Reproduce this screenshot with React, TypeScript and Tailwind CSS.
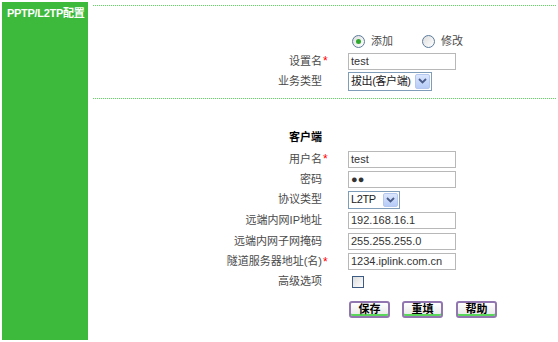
import React from "react";

const FONT = "font-['Liberation_Sans','Noto_Sans_CJK_SC',sans-serif]";

function Star() {
  return <span className="text-[#ff0000] text-[12px] leading-none">*</span>;
}

function Dots({ className }: { className: string }) {
  return (
    <div
      className={`h-[1px] bg-[linear-gradient(to_right,#74c874_50%,#e2f4e2_50%)] bg-[length:2px_1px] ${className}`}
    />
  );
}

function Row({
  label,
  star,
  h,
  bold,
  children,
}: {
  label: string;
  star?: boolean;
  h: string;
  bold?: boolean;
  children?: React.ReactNode;
}) {
  return (
    <div className={`flex items-center ${h}`}>
      <div
        className={`w-[229px] text-right text-[11px] leading-none ${
          bold ? "font-bold text-black" : "text-[#4a4a4a]"
        }`}
      >
        {label}
      </div>
      <div className="w-[26px] pl-[1px] flex items-center">{star ? <Star /> : null}</div>
      <div className="flex items-center">{children}</div>
    </div>
  );
}

function TextBox({ value }: { value: string }) {
  return (
    <div className="w-[108px] h-[17px] border border-[#b8b8b8] bg-white flex items-center px-[2px] text-[11px] text-[#333] leading-none">
      {value}
    </div>
  );
}

function Chevron() {
  return (
    <svg width="9" height="6" viewBox="0 0 9 6">
      <path d="M1 1 L4.5 4.5 L8 1" fill="none" stroke="#4a5d88" strokeWidth="1.8" />
    </svg>
  );
}

function SelectBox({ value, w, h }: { value: string; w: string; h: string }) {
  return (
    <div
      className={`${w} ${h} border border-[#7f9db9] bg-white flex items-center justify-between pl-[2px] pr-[1px] text-[11px] text-[#222] leading-none`}
    >
      <span className="tracking-[-0.4px] whitespace-nowrap">{value}</span>
      <div className="w-[15px] shrink-0 h-[calc(100%-2px)] bg-gradient-to-b from-[#dbe6fd] to-[#b6cbf7] border border-[#b4c7ef] rounded-[2px] flex items-center justify-center">
        <Chevron />
      </div>
    </div>
  );
}

function Radio({ checked }: { checked?: boolean }) {
  return (
    <div className="w-[13px] h-[13px] rounded-full border border-[#5b7b9b] bg-gradient-to-br from-[#dedede] to-white flex items-center justify-center">
      {checked ? <div className="w-[5px] h-[5px] rounded-full bg-[#2fa82f]" /> : null}
    </div>
  );
}

function Btn({ label }: { label: string }) {
  return (
    <div className="w-[41px] h-[17px] rounded-[3px] border-[2px] border-[#9276b0] bg-gradient-to-b from-white to-[#e6e6e6] shadow-[inset_0_-2px_0_#5ad65a] flex items-center justify-center text-[11px] font-bold text-black leading-none">
      {label}
    </div>
  );
}

export default function App() {
  return (
    <div className={`w-[558px] h-[342px] bg-white flex p-[2px] overflow-hidden ${FONT}`}>
      <aside className="w-[86px] h-[338px] bg-[#3db93b] shrink-0">
        <div className="pl-[5px] pt-[6px] text-[11px] font-bold text-white leading-none tracking-[-0.3px]">
          PPTP/L2TP配置
        </div>
      </aside>
      <main className="flex-1 ml-[5px] flex flex-col">
        <Dots className="mt-[3px]" />
        <div className="h-[25px]" />
        {/* radio row */}
        <div className="flex items-center h-[20px]">
          <div className="w-[255px]" />
          <div className="flex items-center pl-[4px] text-[11px] text-[#4a4a4a] leading-none">
            <Radio checked />
            <span className="ml-[6px]">添加</span>
            <div className="ml-[29px]">
              <Radio />
            </div>
            <span className="ml-[6px]">修改</span>
          </div>
        </div>
        <Row label="设置名" star h="h-[20px]">
          <TextBox value="test" />
        </Row>
        <Row label="业务类型" h="h-[20px]">
          <SelectBox value="拔出(客户端)" w="w-[84px]" h="h-[19px]" />
        </Row>
        <Dots className="mt-[7px]" />
        <div className="h-[28px]" />
        <Row label="客户端" bold h="h-[20px]" />
        <div className="h-[2px]" />
        <Row label="用户名" star h="h-[20px]">
          <TextBox value="test" />
        </Row>
        <Row label="密码" h="h-[20px]">
          <TextBox value="●●" />
        </Row>
        <Row label="协议类型" h="h-[21px]">
          <SelectBox value="L2TP" w="w-[52px]" h="h-[18px]" />
        </Row>
        <Row label="远端内网IP地址" h="h-[21px]">
          <TextBox value="192.168.16.1" />
        </Row>
        <Row label="远端内网子网掩码" h="h-[20px]">
          <TextBox value="255.255.255.0" />
        </Row>
        <Row label="隧道服务器地址(名)" star h="h-[21px]">
          <TextBox value="1234.iplink.com.cn" />
        </Row>
        <Row label="高级选项" h="h-[19px]">
          <div className="ml-[4px] w-[12px] h-[12px] border border-[#3c5a82] bg-gradient-to-br from-[#dcdcdc] to-white" />
        </Row>
        <div className="h-[10px]" />
        <div className="flex items-center h-[17px]">
          <div className="w-[256px]" />
          <Btn label="保存" />
          <div className="ml-[12px]">
            <Btn label="重填" />
          </div>
          <div className="ml-[13px]">
            <Btn label="帮助" />
          </div>
        </div>
      </main>
    </div>
  );
}
